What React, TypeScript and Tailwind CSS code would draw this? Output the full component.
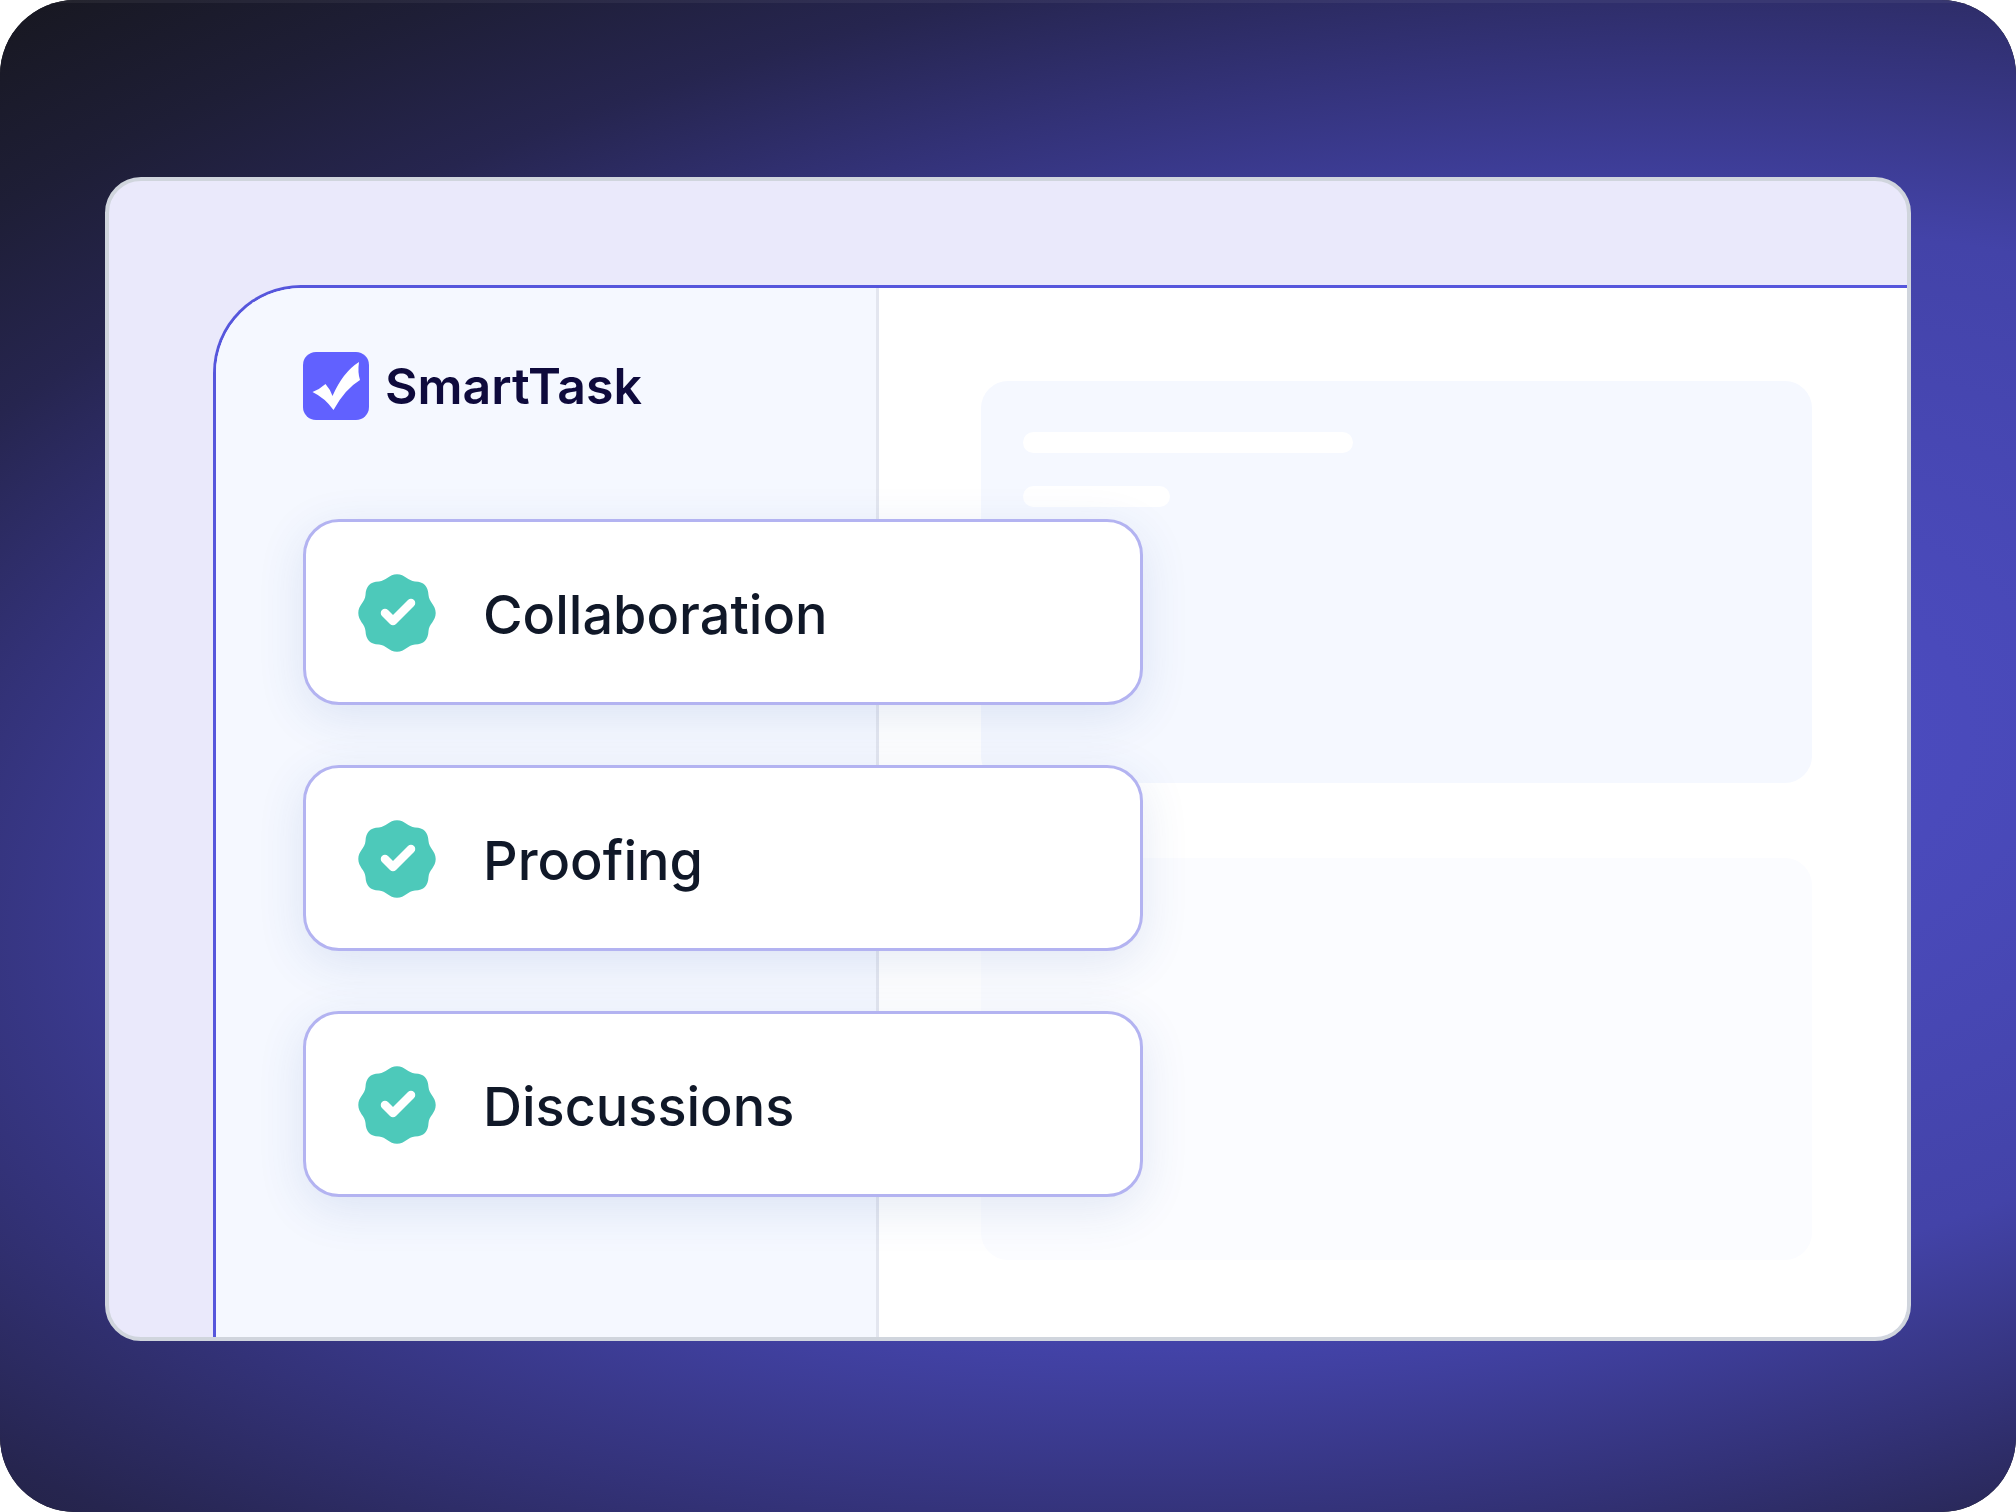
const features = ["Collaboration", "Proofing", "Discussions"];

function Badge() {
  return (
    <svg viewBox="-40 -40 80 80" className="size-20 shrink-0" aria-hidden="true">
      <path
        fill="#4dc9ba"
        d="M0-38.700C8-38.700 11-32 18-31.500C27-31 31-27 31.500-18C32-11 38.700-8 38.700 0C38.700 8 32 11 31.500 18C31 27 27 31 18 31.500C11 32 8 38.700 0 38.700C-8 38.700-11 32-18 31.500C-27 31-31 27-31.500 18C-32 11-38.700 8-38.700 0C-38.700-8-32-11-31.500-18C-31-27-27-31-18-31.500C-11-32-8-38.700 0-38.700Z"
      />
      <path d="M-12 0L-4 8L14-10" fill="none" stroke="#fff" strokeWidth="8.500" strokeLinecap="round" strokeLinejoin="round" />
    </svg>
  );
}

function Logo() {
  return (
    <div className="flex items-center gap-4">
      <svg viewBox="0 0 66 68" className="h-[68px] w-[66px] shrink-0" aria-hidden="true">
        <rect width="66" height="68" rx="13" fill="#6161ff" />
        <path fill="#fff" d="M9.500 40Q17 37 22.500 32Q27 37 29.500 44Q40 20 56 10Q54.500 20 57 28Q42 37 30.500 58Q22 46 9.500 40Z" />
      </svg>
      <span className="text-[50px] leading-[68px] font-semibold text-[#0e0a3c]">SmartTask</span>
    </div>
  );
}

export default function App() {
  return (
    <div className="min-h-screen bg-white font-['Inter',sans-serif]">
      <main className="relative isolate flex min-h-screen flex-col overflow-hidden rounded-[75px] bg-[#17171f] px-[105px] pt-[177px] pb-[171px]">
        <div className="absolute top-[52%] left-[71%] -z-10 h-[2332px] w-[4860px] -translate-x-1/2 -translate-y-1/2 -skew-y-6 bg-[radial-gradient(closest-side,#4f4fd0_0%,#4a4abb_22%,#4343a8_47%,#333278_62%,#26254f_74%,#1e1e36_86%,#17171f_100%)]" />
        <div className="absolute inset-x-0 top-0 h-[3px] bg-white/5" />
        <section className="flex flex-1 flex-col overflow-hidden rounded-[36px] border-4 border-[#d0d5dd] bg-[#eae9fb] pt-[104px] pl-[104px]">
          <div className="flex flex-1 rounded-tl-[88px] border-t-[3px] border-l-[3px] border-[#5656dc] bg-white">
            <aside className="relative z-10 w-[663px] shrink-0 rounded-tl-[85px] border-r-[3px] border-[#e3e6ef] bg-[#f5f8ff] pt-16 pl-[87px]">
              <Logo />
              <ul className="mt-[99px] flex w-[840px] flex-col gap-[60px]">
                {features.map((name) => (
                  <li
                    key={name}
                    className="flex h-[186px] items-center gap-[46px] rounded-[36px] border-[3px] border-[#b3b3f1] bg-white pt-[2px] pl-[51px] shadow-[0_12px_48px_rgba(45,80,165,0.12)]"
                  >
                    <Badge />
                    <span className="pt-[3px] text-[54px] leading-[66px] font-medium text-[#101828]">{name}</span>
                  </li>
                ))}
              </ul>
            </aside>
            <div className="flex min-w-0 flex-1 flex-col gap-[75px] pt-[93px] pr-[95px] pl-[102px]">
              <div className="flex h-[402px] flex-col gap-[33px] rounded-[27px] bg-[#f5f8ff] px-[42px] pt-[51px]">
                <div className="h-[21px] w-[330px] rounded-full bg-white" />
                <div className="h-[21px] w-[147px] rounded-full bg-white" />
              </div>
              <div className="h-[402px] rounded-[27px] bg-[#fbfcff]" />
            </div>
          </div>
        </section>
      </main>
    </div>
  );
}
